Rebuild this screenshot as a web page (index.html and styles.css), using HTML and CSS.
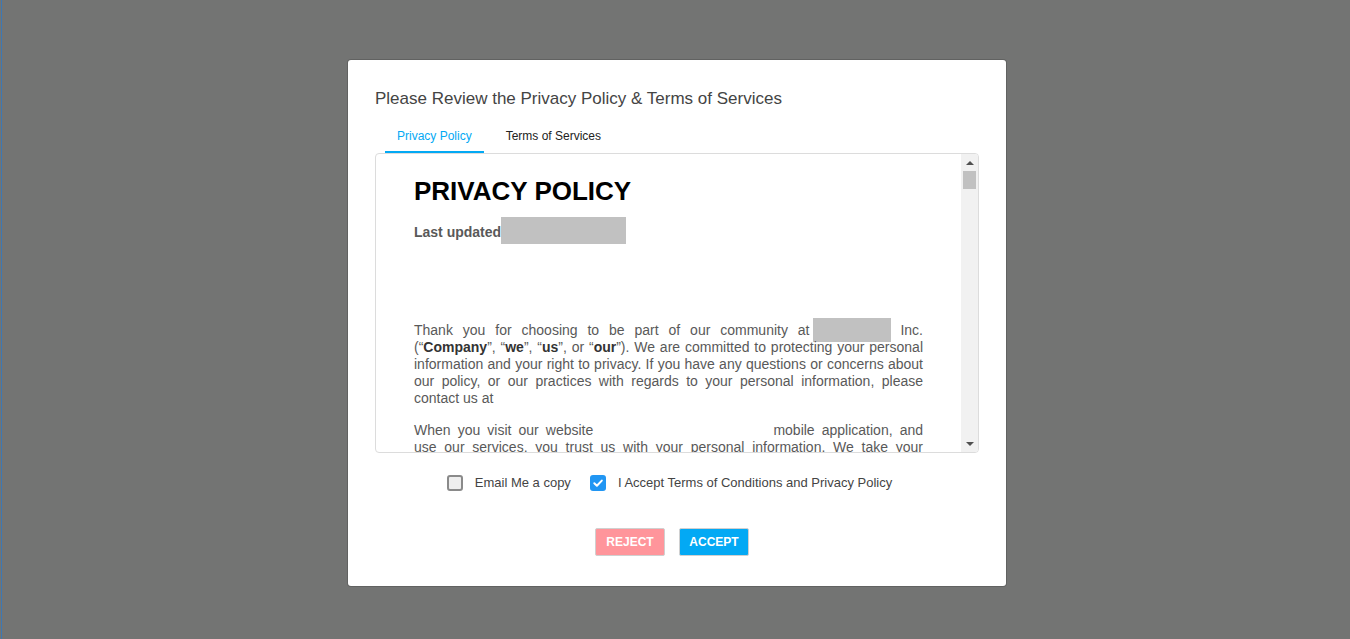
FILE: index.html
```html
<!DOCTYPE html>
<html lang="en">
<head>
<meta charset="utf-8">
<title>Privacy Policy</title>
<link rel="stylesheet" href="styles.css">
</head>
<body>
<div class="backdrop">
  <div class="edge"></div>
  <div class="stage">
    <div class="modal">
      <h2 class="modal-title">Please Review the Privacy Policy &amp; Terms of Services</h2>
      <div class="tabs">
        <div class="tab active">Privacy Policy</div>
        <div class="tab">Terms of Services</div>
      </div>
      <div class="doc">
        <div class="doc-body">
          <h1 class="doc-title">PRIVACY POLICY</h1>
          <p class="updated"><strong>Last updated</strong><span class="redact redact-date"></span></p>
          <p class="para">Thank you for choosing to be part of our community at<span class="redact redact-name"></span> Inc. (“<strong>Company</strong>”, “<strong>we</strong>”, “<strong>us</strong>”, or “<strong>our</strong>”). We are committed to protecting your personal information and your right to privacy. If you have any questions or concerns about our policy, or our practices with regards to your personal information, please contact us at</p>
          <p class="para">When you visit our website <span class="blank"></span> mobile application, and use our services, you trust us with your personal information. We take your privacy very seriously. In this privacy notice, we describe our privacy policy. We seek to explain to you in the clearest way possible what information we collect, how we use it and what rights you have in relation to it.</p>
        </div>
        <div class="scrollbar">
          <div class="sb-btn"><span class="arrow-up"></span></div>
          <div class="sb-track"><div class="sb-thumb"></div></div>
          <div class="sb-btn"><span class="arrow-down"></span></div>
        </div>
      </div>
      <div class="checks">
        <label class="check">
          <span class="box"></span>
          <span class="check-label">Email Me a copy</span>
        </label>
        <label class="check">
          <span class="box checked">
            <svg viewBox="0 0 16 16" width="16" height="16"><path d="M4.3 8.3 L6.9 10.8 L11.8 5.6" fill="none" stroke="#fff" stroke-width="2" stroke-linecap="round" stroke-linejoin="round"/></svg>
          </span>
          <span class="check-label">I Accept Terms of Conditions and Privacy Policy</span>
        </label>
      </div>
      <div class="actions">
        <button class="btn btn-reject">REJECT</button>
        <button class="btn btn-accept">ACCEPT</button>
      </div>
    </div>
  </div>
</div>
</body>
</html>
```

FILE: styles.css
```css
html, body {
  margin: 0;
  padding: 0;
}

body {
  width: 1350px;
  height: 639px;
  overflow: hidden;
  background: #737473;
  font-family: "Liberation Sans", Arial, sans-serif;
}

.backdrop {
  display: flex;
  height: 639px;
}

.edge {
  width: 1px;
  margin-left: 1px;
  background: #3d78b3;
}

.stage {
  flex: 1;
  padding: 60px 0 0 346px;
}

.modal {
  width: 604px;
  height: 468px;
  padding: 29px 27px 29px 27px;
  background: #fff;
  border-radius: 3px;
  box-shadow: 0 0 0 1px rgba(0, 0, 0, 0.15);
  display: flex;
  flex-direction: column;
}

.modal-title {
  margin: 0;
  font-size: 17px;
  line-height: 20px;
  font-weight: normal;
  color: #444;
}

.tabs {
  display: flex;
  margin-top: 11px;
  padding-left: 10px;
  gap: 10px;
  position: relative;
  z-index: 1;
}

.tab {
  padding: 9px 12px 8px 12px;
  font-size: 12px;
  line-height: 14px;
  color: #222;
  border-bottom: 2px solid transparent;
}

.tab.active {
  color: #03a9f4;
  border-bottom-color: #03a9f4;
}

.doc {
  height: 298px;
  border: 1px solid #dcdcdc;
  border-radius: 4px;
  display: flex;
  overflow: hidden;
}

.doc-body {
  flex: 1;
  padding: 22px 38px 0 38px;
  overflow: hidden;
  color: #595959;
}

.doc-title {
  margin: 0;
  font-size: 26px;
  line-height: 30px;
  font-weight: bold;
  color: #000;
}

.updated {
  margin: 18px 0 0 0;
  font-size: 14px;
  line-height: 17px;
}

.updated strong {
  color: #595959;
}

.redact {
  background: #c1c1c1;
}

.redact-date {
  padding: 7px 62px 4px 63px;
}

.redact-name {
  padding: 4px 39px 4px 39px;
  margin-left: 3px;
}

.para {
  margin: 81px 0 0 0;
  font-size: 14px;
  line-height: 17px;
  text-align: justify;
}

.para + .para {
  margin-top: 15px;
}

.para strong {
  color: #333;
}

.blank {
  display: inline-block;
  width: 166px;
}

.scrollbar {
  width: 17px;
  background: #f1f1f1;
  display: flex;
  flex-direction: column;
}

.sb-btn {
  height: 17px;
  display: flex;
  align-items: center;
  justify-content: center;
}

.arrow-up {
  width: 0;
  height: 0;
  border-left: 4px solid transparent;
  border-right: 4px solid transparent;
  border-bottom: 4px solid #505050;
}

.arrow-down {
  width: 0;
  height: 0;
  border-left: 4px solid transparent;
  border-right: 4px solid transparent;
  border-top: 4px solid #505050;
}

.sb-track {
  flex: 1;
  padding: 0 2px;
}

.sb-thumb {
  height: 18px;
  background: #c1c1c1;
}

.checks {
  display: flex;
  justify-content: center;
  align-items: center;
  gap: 19px;
  margin-top: 22px;
  padding-right: 15px;
  height: 16px;
}

.check {
  display: flex;
  align-items: center;
  gap: 12px;
}

.box {
  width: 16px;
  height: 16px;
  box-sizing: border-box;
  border: 2px solid #8a8a8a;
  background: #eee;
  border-radius: 3px;
  display: block;
}

.box.checked {
  border: none;
  background: #2196f3;
}

.box svg {
  display: block;
}

.check-label {
  font-size: 13px;
  line-height: 16px;
  color: #444;
}

.actions {
  display: flex;
  justify-content: center;
  gap: 14px;
  margin-top: 37px;
  padding-right: 10px;
}

.btn {
  width: 70px;
  height: 28px;
  border: 1px solid #d0d0d0;
  border-radius: 2px;
  font-family: "Liberation Sans", Arial, sans-serif;
  font-size: 12px;
  font-weight: bold;
  color: #fff;
  padding: 0;
}

.btn-reject {
  background: #ff959b;
}

.btn-accept {
  background: #03a9f4;
}
```
